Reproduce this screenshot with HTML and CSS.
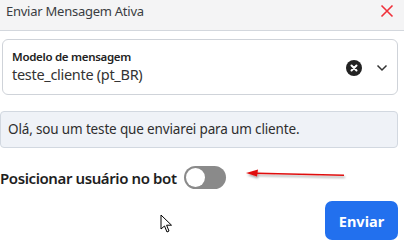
FILE: index.html
```html
<!DOCTYPE html>
<html lang="pt-BR">
<head>
<meta charset="utf-8">
<link rel="stylesheet" href="styles.css">
</head>
<body>
<div class="modal">
  <div class="header">
    <span class="title">Enviar Mensagem Ativa</span>
    <svg class="close" width="14" height="14" viewBox="0 0 14 14"><path d="M1.5 1.5 L12.5 12.5 M12.5 1.5 L1.5 12.5" stroke="#f0303a" stroke-width="1.6" fill="none"/></svg>
  </div>
  <div class="content">
    <div class="select">
      <div class="sel-text">
        <div class="sel-label">Modelo de mensagem</div>
        <div class="sel-value">teste_cliente (pt_BR)</div>
      </div>
      <svg class="clear" width="16" height="16" viewBox="0 0 16 16"><circle cx="8" cy="8" r="8" fill="#222"/><path d="M5.5 5.5 L10.5 10.5 M10.5 5.5 L5.5 10.5" stroke="#fff" stroke-width="2" stroke-linecap="round"/></svg>
      <svg class="chev" width="12" height="8" viewBox="0 0 12 8"><path d="M1.5 1.5 L6 6 L10.5 1.5" stroke="#333" stroke-width="1.5" fill="none"/></svg>
    </div>
    <div class="message">Olá, sou um teste que enviarei para um cliente.</div>
    <div class="toggle-row">
      <span class="toggle-label">Posicionar usuário no bot</span>
      <span class="toggle"><span class="knob"></span></span>
    </div>
    <div class="footer">
      <button class="send">Enviar</button>
    </div>
  </div>
  <svg class="arrow" width="110" height="14" viewBox="0 0 110 14">
    <defs><filter id="sh" x="-10%" y="-50%" width="120%" height="250%"><feDropShadow dx="1" dy="2" stdDeviation="1.2" flood-color="#000" flood-opacity="0.35"/></filter></defs>
    <g filter="url(#sh)">
      <path d="M12 5.2 L100 7.2" stroke="#e01010" stroke-width="1.6" fill="none"/>
      <path d="M2 5 L14 1.5 L13 8.5 Z" fill="#e01010"/>
    </g>
  </svg>
  <svg class="cursor" width="14" height="20" viewBox="0 0 14 20"><path d="M1 1 L1 15 L4.5 12 L7 18 L9 17 L6.6 11.2 L11.5 11.2 Z" fill="#fff" stroke="#000" stroke-width="1"/></svg>
</div>
</body>
</html>
```
FILE: styles.css
```css
* { box-sizing: border-box; }
html, body { margin: 0; padding: 0; background: #fff; }
body { font-family: "Noto Sans", "Open Sans", sans-serif; color: #2b2b2b; width: 404px; height: 246px; overflow: hidden; }
.modal { position: relative; width: 404px; height: 246px; }
.header {
  height: 31px;
  background: #f4f4f5;
  border-bottom: 1px solid #d3d7dd;
  display: flex;
  align-items: center;
  justify-content: space-between;
  padding: 0 10px 9px 6px;
}
.title { font-size: 13px; color: #3a3d42; letter-spacing: -0.25px; }
.close { display: block; }
.content { padding: 8px 6px 0 2px; }
.select {
  height: 56px;
  border: 1px solid #cfd3d9;
  border-radius: 6px;
  display: flex;
  align-items: center;
  padding: 0 9px 0 9px;
}
.sel-text { flex: 1; display: flex; flex-direction: column; padding-bottom: 2px; }
.sel-label { font-size: 11.5px; font-weight: 600; color: #222; line-height: 17px; letter-spacing: -0.3px; }
.sel-value { font-size: 14.5px; color: #333; line-height: 19px; letter-spacing: -0.3px; }
.clear { margin-right: 14px; margin-top: 1px; }
.chev { margin-top: 1px; }
.message {
  margin-top: 16px;
  margin-left: -2px;
  height: 37px;
  background: #eff2f7;
  border: 1px solid #d2d8e0;
  border-radius: 4px;
  display: flex;
  align-items: center;
  padding: 0 0 1px 7px;
  font-size: 13.5px;
  color: #2e2e2e;
  letter-spacing: -0.15px;
}
.toggle-row {
  margin-top: 18px;
  margin-left: -2px;
  display: flex;
  align-items: center;
  height: 23px;
}
.toggle-label { font-size: 15px; font-weight: 600; color: #1e1e1e; letter-spacing: -0.4px; margin-right: 7px; }
.toggle {
  width: 42px; height: 23px; border-radius: 12px;
  background: #8a8a8a;
  display: flex; align-items: center; padding-left: 2px;
}
.knob { width: 19px; height: 19px; border-radius: 50%; background: #fff; }
.footer { display: flex; justify-content: flex-end; margin-top: 12px; }
.send {
  width: 73px; height: 39px;
  background: #2270ee;
  border: none; border-radius: 7px;
  color: #fff; font-family: inherit; font-size: 14.5px; font-weight: 700;
  margin-right: 0;
}
.arrow { position: absolute; left: 244px; top: 168px; }
.cursor { position: absolute; left: 160px; top: 214px; }
```
